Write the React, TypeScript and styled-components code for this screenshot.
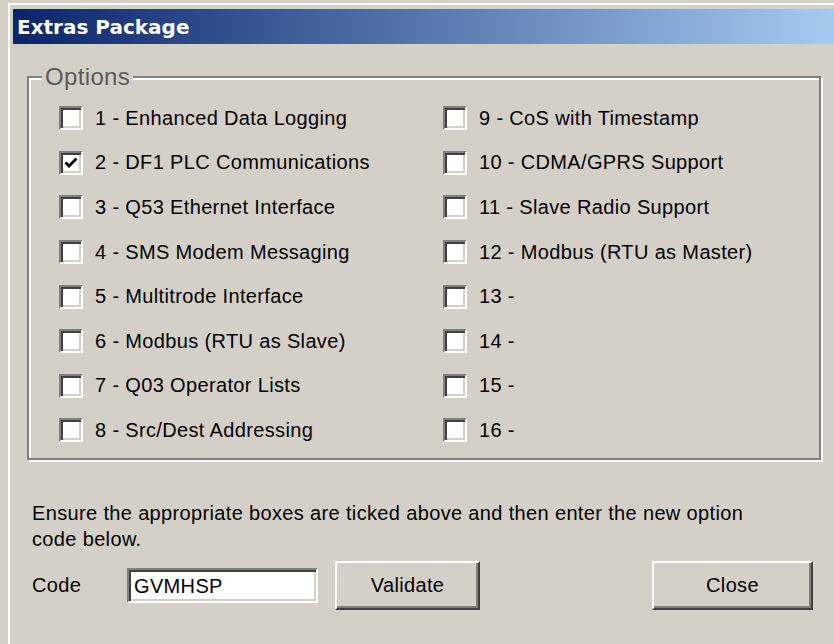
import styled, { createGlobalStyle } from 'styled-components';

const GlobalStyle = createGlobalStyle`
  html, body {
    margin: 0;
    padding: 0;
    background: #d4d0c8;
    overflow: hidden;
  }

  body {
    font-family: 'Liberation Sans', Arial, sans-serif;
    color: #000;
  }
`;

const Window = styled.div`
  margin: 3px 0 0 8px;
  height: 641px;
  box-sizing: border-box;
  border-top: 2px solid #fff;
  border-left: 2px solid #fff;
  padding: 4px 0 0 3px;
  background: #d4d0c8;
`;

const TitleBar = styled.div`
  height: 35px;
  display: flex;
  align-items: center;
  padding-left: 4px;
  background: linear-gradient(to right, #0a246a, #a6caf0);
  color: #fff;
  font-family: 'DejaVu Sans', Verdana, sans-serif;
  font-weight: bold;
  font-size: 20px;
`;

const Content = styled.div`
  padding: 21px 13px 0 14px;
  font-size: 20px;
  letter-spacing: 0.35px;
`;

const Group = styled.fieldset`
  margin: 0;
  padding: 0;
  border: 2px solid #808080;
  box-shadow: inset 2px 2px 0 #fff, 2px 2px 0 #fff;
  min-width: 0;
`;

const Legend = styled.legend`
  margin-left: 13px;
  padding: 0 3px;
  font-size: 24px;
  line-height: 24px;
  color: #5a5a5a;
  background: #d4d0c8;
`;

const OptionGrid = styled.div`
  display: grid;
  padding: 7px 0 5px 30px;
  grid-template-columns: 384px 1fr;
  grid-template-rows: repeat(8, 44.6px);
  grid-auto-flow: column;
`;

const Option = styled.label`
  display: flex;
  align-items: center;
  gap: 12px;
  white-space: nowrap;
`;

const Box = styled.span`
  width: 24px;
  height: 24px;
  flex: none;
  box-sizing: border-box;
  display: flex;
  align-items: center;
  justify-content: center;
  background: #fff;
  border: 2px solid;
  border-color: #808080 #fff #fff #808080;
  box-shadow: inset 2px 2px 0 #404040, inset -2px -2px 0 #d4d0c8;
`;

const Note = styled.p`
  margin: 40px 0 0 5px;
  line-height: 26px;
`;

const CodeRow = styled.div`
  display: flex;
  align-items: center;
  margin: 9px 0 0 5px;
`;

const CodeLabel = styled.span`
  width: 95px;
`;

const CodeInput = styled.input`
  width: 191px;
  height: 35px;
  box-sizing: border-box;
  padding: 2px 0 0 5px;
  font-family: inherit;
  font-size: 20px;
  letter-spacing: 0.35px;
  color: #000;
  background: #fff;
  border: 2px solid;
  border-color: #808080 #fff #fff #808080;
  box-shadow: inset 2px 2px 0 #404040, inset -2px -2px 0 #d4d0c8;
  outline: none;
`;

const Button = styled.button<{ $width: number; $gap: number }>`
  width: ${({ $width }) => $width}px;
  height: 49px;
  margin-left: ${({ $gap }) => $gap}px;
  box-sizing: border-box;
  font-family: inherit;
  font-size: 20px;
  letter-spacing: 0.35px;
  color: #000;
  background: #d4d0c8;
  border: 2px solid;
  border-color: #fff #404040 #404040 #fff;
  box-shadow: inset -2px -2px 0 #808080;
  padding: 0;
`;

const Tick = () => (
  <svg width="16" height="16" viewBox="0 0 16 16">
    <path d="M2.5 7.5 L6 11 L13.5 3.5" fill="none" stroke="#000" strokeWidth="2.8" />
  </svg>
);

const options = [
  '1 - Enhanced Data Logging',
  '2 - DF1 PLC Communications',
  '3 - Q53 Ethernet Interface',
  '4 - SMS Modem Messaging',
  '5 - Multitrode Interface',
  '6 - Modbus (RTU as Slave)',
  '7 - Q03 Operator Lists',
  '8 - Src/Dest Addressing',
  '9 - CoS with Timestamp',
  '10 - CDMA/GPRS Support',
  '11 - Slave Radio Support',
  '12 - Modbus (RTU as Master)',
  '13 -',
  '14 -',
  '15 -',
  '16 -',
];

const ticked = new Set([1]);

const App = () => {
  return (
    <>
      <GlobalStyle />
      <Window>
        <TitleBar>Extras Package</TitleBar>
        <Content>
          <Group>
            <Legend>Options</Legend>
            <OptionGrid>
              {options.map((text, i) => (
                <Option key={text}>
                  <Box>{ticked.has(i) && <Tick />}</Box>
                  {text}
                </Option>
              ))}
            </OptionGrid>
          </Group>
          <Note>
            Ensure the appropriate boxes are ticked above and then enter the new option
            <br />
            code below.
          </Note>
          <CodeRow>
            <CodeLabel>Code</CodeLabel>
            <CodeInput defaultValue="GVMHSP" />
            <Button $width={145} $gap={17}>Validate</Button>
            <Button $width={161} $gap={172}>Close</Button>
          </CodeRow>
        </Content>
      </Window>
    </>
  );
};

export default App;
